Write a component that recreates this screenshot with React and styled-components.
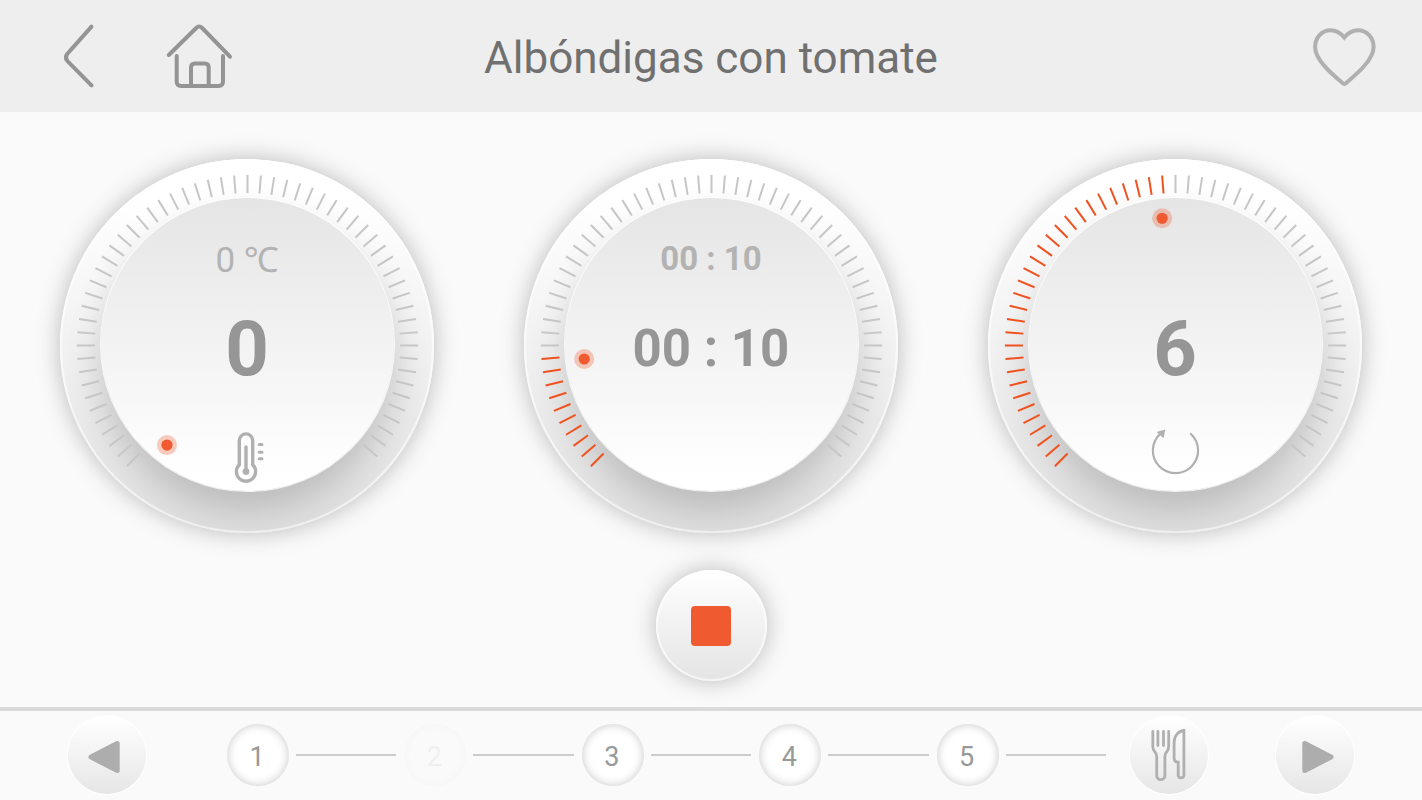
import React, { useState } from "react";
import styled, { createGlobalStyle } from "styled-components";

const TICKS = 60;
const STEP_ANGLE = 360 / 80;

const pad = (n) => String(n).padStart(2, "0");
const asTime = (n) => `${pad(Math.floor(n / 60))} : ${pad(n % 60)}`;

function BackIcon() {
  return (
    <LineIcon width="36" height="68" viewBox="0 0 36 68">
      <path d="M31.5 4.7 L7.2 32 Q4.6 35.3 7.2 38.8 L31.5 63.3" />
    </LineIcon>
  );
}

function HomeIcon() {
  return (
    <LineIcon width="68" height="68" viewBox="0 0 68 68">
      <path d="M3.8 33 L31.2 6 Q34.2 3 37.2 6 L65 34.7" />
      <path d="M11.7 34 V59.5 Q11.7 64 16.2 64 H53.5 Q58 64 58 59.5 V34" />
      <path d="M26 64 V45.5 Q26 41.4 30 41.4 H39.7 Q43.7 41.4 43.7 45.5 V64" />
    </LineIcon>
  );
}

function HeartIcon() {
  return (
    <LineIcon width="66" height="68" viewBox="0 0 66 68" $light>
      <path
        strokeLinejoin="miter"
        d="M33.3 15.5 C29.5 10.7 24.8 8.2 19.5 8.2 C10.8 8.2 4.1 15.6 4.1 25 C4.1 38 21 52 31.5 61 Q33.3 63 35.1 61 C45.6 52 62.6 38 62.6 25 C62.6 15.6 55.8 8.2 47.1 8.2 C41.8 8.2 37.1 10.7 33.3 15.5 Z"
      />
    </LineIcon>
  );
}

function ThermometerIcon() {
  return (
    <svg width="52" height="56" viewBox="0 0 52 56" fill="none" stroke="#b0b0b0" strokeLinecap="round">
      <path
        strokeWidth="3.4"
        d="M18.3 36.7 V12.6 A6.7 6.7 0 0 1 31.7 12.6 V36.7 A9.6 9.6 0 1 1 18.3 36.7 Z"
      />
      <path strokeWidth="3.4" d="M25 19 V43" />
      <circle cx="25" cy="43.6" r="3.4" fill="#b0b0b0" stroke="none" />
      <path strokeWidth="3" d="M38.2 16.5 H41 M38.2 24.3 H41 M38.2 30.7 H41" />
    </svg>
  );
}

function RotateIcon() {
  return (
    <svg width="52" height="56" viewBox="0 0 52 56" fill="none" stroke="#b0b0b0">
      <path strokeWidth="2.2" strokeLinecap="round" d="M41.9 6 A22.6 22.6 0 1 1 11.5 5.6" />
      <path fill="#b0b0b0" stroke="none" d="M16.3 1.4 L7.6 4 L14.6 10.2 Z" />
    </svg>
  );
}

function ArrowIcon({ flip }) {
  return (
    <svg width="78" height="78" viewBox="0 0 78 78" fill="#adadad" stroke="#adadad" strokeWidth="5" strokeLinejoin="round">
      <path d={flip ? "M28.8 27.5 V54.5 L55 41 Z" : "M49.2 27.5 V54.5 L23 41 Z"} />
    </svg>
  );
}

function CutleryIcon() {
  return (
    <svg width="78" height="78" viewBox="0 0 78 78" fill="none" stroke="#b0b0b0" strokeWidth="2.8" strokeLinecap="round">
      <path d="M22.8 15.5 V30.5 C22.8 36.5 26.7 35 26.7 40.5 V59.5 A4.1 4.1 0 0 0 34.9 59.5 V40.5 C34.9 35 38.7 36.5 38.7 30.5 V15.5" />
      <path d="M27.9 15.5 V29.5 M33.5 15.5 V29.5" />
      <path d="M53.9 14.5 C48.5 15 44.1 19.5 44.1 26.5 V42 Q44.1 46.2 48.2 46.2 V59.5 A2.9 2.9 0 0 0 53.9 59.5 Z" />
    </svg>
  );
}

function Dial({ label, start, format, secondary, icon }) {
  const [value, setValue] = useState(start);
  const angle = ((value * STEP_ANGLE - 141) * Math.PI) / 180;

  return (
    <DialRing>
      <Knob>
        <Target>{secondary}</Target>
        <Reading $small={format === asTime}>{format(value)}</Reading>
        {icon}
      </Knob>
      <Scale viewBox="0 0 374 374">
        {Array.from({ length: TICKS }, (_, i) => (
          <line
            key={i}
            x1="187.5"
            x2="187.5"
            y1="16"
            y2="34"
            stroke={i < value ? "#f0521f" : "#c6c6c6"}
            strokeWidth="2"
            transform={`rotate(${i * STEP_ANGLE - 135} 187.5 186.6)`}
          />
        ))}
        <g transform={`translate(${187.5 + 128 * Math.sin(angle)} ${186.6 - 128 * Math.cos(angle)})`} fill="#f05a30">
          <circle r="10" opacity="0.3" />
          <circle r="5.6" />
        </g>
      </Scale>
      <DialInput
        type="range"
        min="0"
        max={TICKS}
        value={value}
        aria-label={label}
        onChange={(e) => setValue(Number(e.target.value))}
      />
    </DialRing>
  );
}

export default function App() {
  const [step, setStep] = useState(2);

  return (
    <Page>
      <GlobalStyle />
      <Header>
        <Nav>
          <IconButton aria-label="Atrás">
            <BackIcon />
          </IconButton>
          <IconButton aria-label="Inicio">
            <HomeIcon />
          </IconButton>
        </Nav>
        <Title>Albóndigas con tomate</Title>
        <Favourite aria-label="Favorito">
          <HeartIcon />
        </Favourite>
      </Header>
      <Main>
        <Dials>
          <Dial
            label="Temperatura"
            start={0}
            format={(n) => n * 2}
            secondary="0 ℃"
            icon={<ThermometerIcon />}
          />
          <Dial label="Tiempo" start={10} format={asTime} secondary={<b>00 : 10</b>} />
          <Dial label="Velocidad" start={30} format={(n) => Math.round(n / 5)} icon={<RotateIcon />} />
        </Dials>
        <StopButton aria-label="Parar">
          <StopSquare />
        </StopButton>
      </Main>
      <Footer>
        <RoundButton aria-label="Anterior" onClick={() => setStep(Math.max(1, step - 1))}>
          <ArrowIcon />
        </RoundButton>
        <Steps>
          {[1, 2, 3, 4, 5].map((n) => (
            <React.Fragment key={n}>
              <StepButton $current={n === step} onClick={() => setStep(n)}>
                {n}
              </StepButton>
              <StepLine />
            </React.Fragment>
          ))}
        </Steps>
        <FooterEnd>
          <RoundButton aria-label="Servir">
            <CutleryIcon />
          </RoundButton>
          <RoundButton aria-label="Siguiente" onClick={() => setStep(Math.min(5, step + 1))}>
            <ArrowIcon flip />
          </RoundButton>
        </FooterEnd>
      </Footer>
    </Page>
  );
}

const GlobalStyle = createGlobalStyle`
  * {
    box-sizing: border-box;
  }
  body {
    margin: 0;
    background: #fafafa;
    font-family: Roboto, "Noto Sans", sans-serif;
  }
  button {
    padding: 0;
    border: none;
    background: none;
    font-family: inherit;
    cursor: pointer;
  }
  svg {
    display: block;
  }
`;

const Page = styled.div`
  min-height: 100vh;
  display: flex;
  flex-direction: column;
`;

const Header = styled.header`
  display: grid;
  grid-template-columns: 1fr auto 1fr;
  align-items: center;
  padding: 22px 0;
  background: #eeeeee;
`;

const Nav = styled.nav`
  display: flex;
  gap: 69px;
  padding-left: 60px;
`;

const IconButton = styled.button`
  display: flex;
`;

const Favourite = styled(IconButton)`
  justify-self: end;
  margin-right: 45px;
`;

const LineIcon = styled.svg`
  fill: none;
  stroke: ${({ $light }) => ($light ? "#b0b0b0" : "#949494")};
  stroke-width: 4;
  stroke-linecap: round;
`;

const Title = styled.h1`
  margin: 0;
  padding-top: 4px;
  font-size: 44px;
  font-weight: 400;
  line-height: 60px;
  color: #707070;
`;

const Main = styled.main`
  flex: 1;
  display: flex;
  flex-direction: column;
  align-items: center;
  gap: 37px;
  padding: 47px 60px 26px;
`;

const Dials = styled.div`
  width: 100%;
  display: flex;
  justify-content: space-between;
`;

const DialRing = styled.section`
  position: relative;
  display: flex;
  justify-content: center;
  align-items: flex-start;
  width: 374px;
  height: 374px;
  padding-top: 39px;
  border-radius: 50%;
  overflow: hidden;
  background: linear-gradient(#ffffff 10%, #e0e0e0 100%);
  box-shadow: 0 0 24px rgba(0, 0, 0, 0.26), inset 0 0 0 2px rgba(255, 255, 255, 0.6);
`;

const Scale = styled.svg`
  position: absolute;
  inset: 0;
`;

const Knob = styled.div`
  display: flex;
  flex-direction: column;
  align-items: center;
  width: 293px;
  height: 293px;
  padding-top: 40px;
  border-radius: 50%;
  background: linear-gradient(#e5e5e5, #ffffff 95%);
  box-shadow: 0 0 0 1px rgba(255, 255, 255, 0.8), 0 20px 36px rgba(0, 0, 0, 0.18);
`;

const Target = styled.div`
  height: 44px;
  margin-bottom: 21px;
  font-size: 35px;
  line-height: 46px;
  color: #b3b3b3;
  b {
    display: block;
    font-size: 33px;
    line-height: 42px;
  }
`;

const Reading = styled.output`
  height: 92px;
  margin-bottom: 33px;
  font-size: ${({ $small }) => ($small ? "51px" : "76px")};
  font-weight: 700;
  line-height: 92px;
  color: #969696;
`;

const DialInput = styled.input`
  position: absolute;
  inset: 0;
  width: 100%;
  height: 100%;
  margin: 0;
  opacity: 0;
  cursor: pointer;
`;

const StopButton = styled.button`
  display: flex;
  align-items: center;
  justify-content: center;
  width: 111px;
  height: 111px;
  border-radius: 50%;
  background: linear-gradient(#ffffff, #e4e4e4);
  box-shadow: 0 0 24px rgba(0, 0, 0, 0.26), inset 0 0 0 2px rgba(255, 255, 255, 0.6);
`;

const StopSquare = styled.span`
  width: 40px;
  height: 40px;
  border-radius: 4px;
  background: #f05a30;
`;

const Footer = styled.footer`
  display: flex;
  align-items: center;
  padding: 5px 68px 6px;
  border-top: 4px solid #dadada;
`;

const RoundButton = styled.button`
  width: 78px;
  height: 78px;
  border-radius: 50%;
  background: linear-gradient(#ffffff, #e6e6e6);
  box-shadow: 0 0 0 1px #ffffff;
`;

const Steps = styled.div`
  flex: 1;
  display: flex;
  align-items: center;
  margin: 0 24px 0 81px;
`;

const StepButton = styled.button`
  width: 62px;
  height: 62px;
  padding: 4px 2px 0 0;
  border-radius: 50%;
  font-size: 27px;
  color: #999999;
  background: #ffffff;
  box-shadow: inset 0 0 10px rgba(0, 0, 0, 0.22);
  opacity: ${({ $current }) => ($current ? 0.1 : 1)};
`;

const StepLine = styled.span`
  flex: 1;
  height: 2px;
  margin: 0 8px 0 7px;
  background: #cccccc;
  &:last-child {
    margin-right: 0;
  }
`;

const FooterEnd = styled.div`
  display: flex;
  gap: 68px;
`;
